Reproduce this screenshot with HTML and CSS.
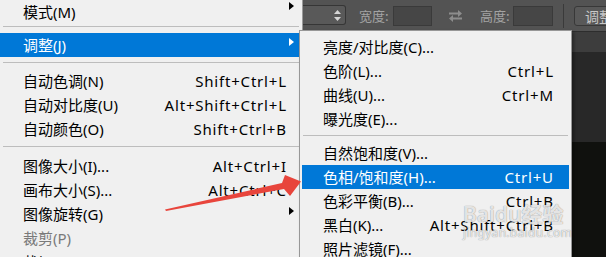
FILE: index.html
```html
<!DOCTYPE html>
<html lang="zh-CN">
<head>
    <meta charset="UTF-8">
    <meta name="viewport" content="width=device-width, initial-scale=1.0">
    <title>图像 - 调整</title>
    <link rel="stylesheet" href="styles.css">
</head>
<body>
    <div class="screen">
        <!-- 图像菜单 -->
        <div class="menu">
            <div class="item item-first"><span class="label">模式(M)</span><span class="more more-top"></span></div>
            <div class="sep sep-a"></div>
            <div class="item active"><span class="label">调整(J)</span><span class="more"></span></div>
            <div class="sep sep-b"></div>
            <div class="item"><span class="label">自动色调(N)</span><span class="key">Shift+Ctrl+L</span></div>
            <div class="item"><span class="label">自动对比度(U)</span><span class="key">Alt+Shift+Ctrl+L</span></div>
            <div class="item"><span class="label">自动颜色(O)</span><span class="key">Shift+Ctrl+B</span></div>
            <div class="sep sep-c"></div>
            <div class="item"><span class="label">图像大小(I)...</span><span class="key">Alt+Ctrl+I</span></div>
            <div class="item"><span class="label">画布大小(S)...</span><span class="key">Alt+Ctrl+C</span></div>
            <div class="item"><span class="label">图像旋转(G)</span><span class="more"></span></div>
            <div class="item disabled"><span class="label">裁剪(P)</span></div>
            <div class="item"><span class="label">裁切(R)...</span></div>
        </div>

        <div class="app">
            <div class="toolbar">
                <div class="select">
                    <svg class="updown" width="7" height="11" viewBox="0 0 7 11">
                        <path d="M3.5 0 L7 4 L0 4 Z M0 7 L7 7 L3.5 11 Z" fill="#d6d6d6"/>
                    </svg>
                </div>
                <span class="field-label label-w">宽度:</span>
                <div class="field field-w"></div>
                <svg class="swap" width="15" height="14" viewBox="0 0 15 14">
                    <path d="M1 3.5 H10 V1 L14 4.5 L10 8 V5.5 H1 Z" fill="#8d8d8d"/>
                    <path d="M14 8.5 H5 V6 L1 9.5 L5 13 V10.5 H14 Z" fill="#8d8d8d"/>
                </svg>
                <span class="field-label label-h">高度:</span>
                <div class="field field-h"></div>
                <div class="divider"></div>
                <button class="tool-btn">调整</button>
            </div>
            <div class="tabbar"></div>
            <div class="panel"></div>
            <div class="canvas"></div>
        </div>

        <!-- 调整子菜单 -->
        <div class="submenu">
            <div class="item"><span class="label">亮度/对比度(C)...</span></div>
            <div class="item"><span class="label">色阶(L)...</span><span class="key">Ctrl+L</span></div>
            <div class="item"><span class="label">曲线(U)...</span><span class="key">Ctrl+M</span></div>
            <div class="item"><span class="label">曝光度(E)...</span></div>
            <div class="sep sep-sub"></div>
            <div class="item"><span class="label">自然饱和度(V)...</span></div>
            <div class="item active"><span class="label">色相/饱和度(H)...</span><span class="key">Ctrl+U</span></div>
            <div class="item"><span class="label">色彩平衡(B)...</span><span class="key">Ctrl+B</span></div>
            <div class="item"><span class="label">黑白(K)...</span><span class="key">Alt+Shift+Ctrl+B</span></div>
            <div class="item"><span class="label">照片滤镜(F)...</span></div>
        </div>

        <svg class="pointer" width="606" height="257" viewBox="0 0 606 257">
            <polygon points="165,209.5 282,183 285,175 301,181.5 290,196 284,189 166,211" fill="#e8453c"/>
        </svg>

        <div class="watermark">
            <div class="wm-main">Baidu经验</div>
            <div class="wm-url">jingyan.baidu.com</div>
        </div>
    </div>
</body>
</html>
```

FILE: styles.css
```css
* {
    margin: 0;
    padding: 0;
    box-sizing: border-box;
}

body {
    background-color: #111;
    font-family: "Noto Sans", "Noto Sans CJK SC", sans-serif;
}

.screen {
    position: relative;
    display: flex;
    width: 606px;
    height: 257px;
    overflow: hidden;
}

/* menus */
.menu {
    width: 303px;
    flex-shrink: 0;
    background-color: #f0f0f0;
    border-right: 1px solid #9a9a9a;
}

.item {
    display: flex;
    align-items: center;
    height: 24px;
    line-height: 24px;
    font-size: 15px;
    color: #000;
    white-space: nowrap;
}

.menu .item {
    padding: 0 16px 0 23px;
}

.label {
    flex: 1;
}

.key {
    letter-spacing: 0.8px;
    margin-right: -0.8px;
}

.item.active {
    background-color: #0078d7;
    color: #fff;
}

.item.disabled {
    color: #7a7a7a;
}

.more {
    width: 0;
    height: 0;
    margin-right: -8px;
    margin-top: -6px;
    border-left: 5px solid #000;
    border-top: 4.5px solid transparent;
    border-bottom: 4.5px solid transparent;
}

.more-top {
    margin-top: -12px;
}

.item.active .more {
    border-left-color: #fff;
}

.sep {
    height: 1px;
    background-color: #bdbdbd;
}

.sep-a {
    margin: 2px 3px 6px;
}

.sep-b {
    margin: 5px 3px 6px;
}

.sep-c {
    margin: 5px 3px 7px;
}

.submenu {
    position: absolute;
    left: 299px;
    top: 30px;
    width: 273px;
    height: 240px;
    padding: 4px 2px;
    background-color: #f0f0f0;
    border: 1px solid #979797;
    box-shadow: 2px 2px 3px rgba(0, 0, 0, 0.35);
}

.submenu .item {
    padding: 0 16px 0 21px;
}

.sep-sub {
    margin: 4px 1px 5px;
}

/* photoshop side */
.app {
    flex: 1;
    min-width: 0;
    display: flex;
    flex-direction: column;
}

.toolbar {
    display: flex;
    align-items: center;
    height: 32px;
    flex-shrink: 0;
    overflow: hidden;
    background-color: #535353;
    border-bottom: 1px solid #2d2d2d;
    font-family: "Noto Sans CJK SC", sans-serif;
}

.toolbar > * {
    flex-shrink: 0;
}

.select {
    display: flex;
    align-items: center;
    justify-content: flex-end;
    width: 43px;
    height: 20px;
    margin-top: -1px;
    padding-right: 4px;
    background-color: #595959;
    border: 1px solid #363636;
    border-left: none;
    border-radius: 0 3px 3px 0;
}

.field-label {
    width: 30px;
    font-size: 13px;
    line-height: 18px;
    color: #a3a3a3;
}

.label-w {
    margin-left: 13px;
}

.label-h {
    margin-left: 17px;
}

.field {
    width: 40px;
    height: 20px;
    background-color: #464646;
    border: 1px solid #3a3a3a;
}

.field-w {
    margin-left: 4px;
    width: 39px;
}

.field-h {
    margin-left: 3px;
}

.swap {
    margin-left: 16px;
}

.divider {
    width: 1px;
    height: 24px;
    margin-left: 10px;
    background-color: #3a3a3a;
}

.tool-btn {
    height: 20px;
    width: 50px;
    margin-left: 10px;
    padding-left: 10px;
    text-align: left;
    font-family: "Noto Sans CJK SC", sans-serif;
    font-size: 14px;
    line-height: 18px;
    color: #c8c8c8;
    background-color: #595959;
    border: 1px solid #383838;
    border-radius: 3px;
}

.tabbar {
    height: 20px;
    background-color: #3d3d3d;
}

.panel {
    height: 90px;
    background-color: #282828;
}

.canvas {
    flex: 1;
    background-color: #10110e;
}

/* overlays */
.pointer {
    position: absolute;
    left: 0;
    top: 0;
    pointer-events: none;
}

.watermark {
    position: absolute;
    left: 463px;
    top: 201px;
    color: rgba(255, 255, 255, 0.8);
    text-shadow: 0 0 1px rgba(0, 0, 0, 0.35), 0 0 1px rgba(0, 0, 0, 0.2);
    pointer-events: none;
    font-family: "Noto Sans", "Noto Sans CJK SC", sans-serif;
}

.wm-main {
    font-size: 21px;
    line-height: 26px;
    font-weight: 600;
}

.wm-url {
    font-size: 12px;
    line-height: 12px;
    letter-spacing: 0.3px;
}
```
